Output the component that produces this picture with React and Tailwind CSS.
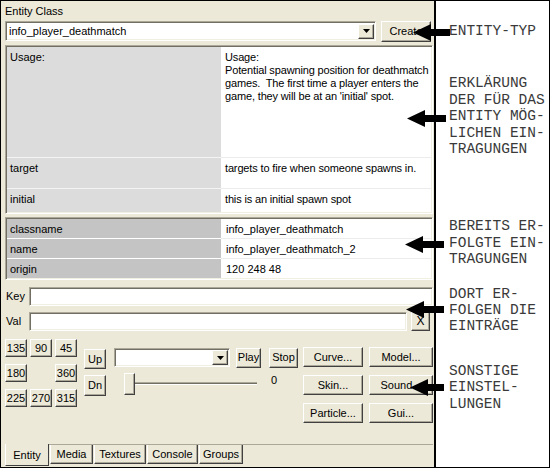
import React from "react";

const raised =
  "border border-t-white border-l-white border-r-[#404040] border-b-[#404040] shadow-[inset_-1px_-1px_0_#aca899] bg-[#ece9d8]";
const sunken =
  "border border-t-[#aca899] border-l-[#aca899] border-r-white border-b-white shadow-[inset_1px_1px_0_#716f64,inset_-1px_-1px_0_#f1efe2]";

function Btn({ className = "", children }) {
  return (
    <div className={`${raised} flex items-center justify-center leading-[13px] ${className}`}>
      {children}
    </div>
  );
}

function DropArrow() {
  return (
    <div className={`${raised} w-[16px] h-[15px] flex items-center justify-center shrink-0`}>
      <svg width="7" height="4" viewBox="0 0 7 4">
        <path d="M0 0h7L3.5 4z" fill="#000" />
      </svg>
    </div>
  );
}

function Arrow({ left, top, len }) {
  return (
    <svg
      className="absolute"
      style={{ left, top }}
      width={len}
      height="17"
      viewBox={`0 0 ${len} 17`}
    >
      <polygon
        points={`0,8.5 18,0 18,5 ${len},5 ${len},12 18,12 18,17`}
        fill="#000"
      />
    </svg>
  );
}

const usageRows = [
  {
    key: "Usage:",
    h: "h-[111px]",
    val: (
      <>
        Usage:
        <br />
        Potential spawning position for deathmatch
        <br />
        games.&nbsp; The first time a player enters the
        <br />
        game, they will be at an 'initial' spot.
      </>
    ),
  },
  { key: "target", h: "h-[31px]", val: "targets to fire when someone spawns in." },
  { key: "initial", h: "h-[21px]", val: "this is an initial spawn spot", last: true },
];

const props = [
  ["classname", "info_player_deathmatch"],
  ["name", "info_player_deathmatch_2"],
  ["origin", "120 248 48"],
];

const tabs = [
  { name: "Entity", w: "w-[44px]", active: true },
  { name: "Media", w: "w-[43px]" },
  { name: "Textures", w: "w-[52px]" },
  { name: "Console", w: "w-[51px]" },
  { name: "Groups", w: "w-[44px]" },
];

export default function App() {
  return (
    <div className="relative w-[550px] h-[468px] border border-black bg-white flex font-['Liberation_Sans',Arial,sans-serif] text-[11px] text-black overflow-hidden">
      {/* entity inspector */}
      <div className="w-[433px] h-[466px] bg-[#ece9d8] flex flex-col pl-[4px] pr-[1px]">
        <div className="h-[20px] pt-[3px] leading-[14px]">Entity Class</div>

        <div className="flex h-[20px]">
          <div className={`${sunken} bg-white w-[371px] h-[20px] flex items-center pr-[1px]`}>
            <span className="flex-1 pl-[3px]">info_player_deathmatch</span>
            <DropArrow />
          </div>
          <Btn className="ml-[5px] w-[50px] h-[21px]">Create</Btn>
        </div>

        {/* keys and descriptions */}
        <div className={`${sunken} mt-[4px] h-[169px] w-[428px] bg-white p-[1px] flex flex-col overflow-hidden`}>
          {usageRows.map((r) => (
            <div key={r.key} className={`flex shrink-0 ${r.h}`}>
              <div className={`w-[214px] shrink-0 bg-[#dcdcdc] pl-[3px] pt-[4px] leading-[13px] ${r.last ? "" : "border-b border-[#f4f4f4]"}`}>
                {r.key}
              </div>
              <div className={`flex-1 min-w-0 pl-[4px] pt-[4px] leading-[13px] whitespace-nowrap tracking-[-0.15px] ${r.last ? "" : "border-b border-[#ececec]"}`}>
                {r.val}
              </div>
            </div>
          ))}
          <div className="flex flex-1">
            <div className="w-[214px] bg-[#dcdcdc]" />
          </div>
        </div>

        {/* current key/value pairs */}
        <div className={`${sunken} mt-[3px] w-[428px] bg-white p-[1px] flex flex-col`}>
          {props.map(([k, v], i) => (
            <div key={k} className={`flex ${i < 2 ? "h-[20px]" : "h-[19px]"}`}>
              <div className={`w-[214px] bg-[#c4c4c4] pl-[3px] pt-[3px] leading-[14px] ${i < 2 ? "border-b border-white" : ""}`}>
                {k}
              </div>
              <div className={`flex-1 pl-[5px] pt-[3px] leading-[14px] ${i < 2 ? "border-b border-[#ececec]" : ""}`}>
                {v}
              </div>
            </div>
          ))}
        </div>

        <div className="flex items-center mt-[7px] h-[19px]">
          <span className="w-[24px] pl-[1px]">Key</span>
          <div className={`${sunken} bg-white w-[404px] h-[19px]`} />
        </div>

        <div className="flex items-center mt-[6px] h-[19px]">
          <span className="w-[24px] pl-[1px]">Val</span>
          <div className={`${sunken} bg-white w-[378px] h-[19px]`} />
          <Btn className="ml-[4px] w-[19px] h-[19px] text-[12px]">X</Btn>
        </div>

        {/* tools */}
        <div className="flex mt-[8px] items-start">
          <div className="grid grid-cols-[22px_22px_22px] gap-x-[3px] gap-y-[7px]">
            <Btn className="h-[18px]">135</Btn>
            <Btn className="h-[18px]">90</Btn>
            <Btn className="h-[18px]">45</Btn>
            <Btn className="h-[18px]">180</Btn>
            <div />
            <Btn className="h-[18px]">360</Btn>
            <Btn className="h-[18px]">225</Btn>
            <Btn className="h-[18px]">270</Btn>
            <Btn className="h-[18px]">315</Btn>
          </div>

          <div className="ml-[7px] flex flex-col">
            <Btn className="mt-[10px] w-[22px] h-[20px]">Up</Btn>
            <Btn className="mt-[6px] w-[22px] h-[21px]">Dn</Btn>
          </div>

          <div className="ml-[8px] flex flex-col">
            <div className="mt-[9px] flex items-center h-[19px]">
              <div className={`${sunken} bg-white w-[116px] h-[19px] flex items-center justify-end pr-[1px]`}>
                <DropArrow />
              </div>
              <Btn className="ml-[6px] w-[25px] h-[20px]">Play</Btn>
              <Btn className="ml-[8px] w-[29px] h-[20px]">Stop</Btn>
            </div>
            <div className="mt-[6px] flex items-start">
              <div className="relative ml-[10px] w-[133px] h-[22px]">
                <div className="absolute left-0 right-0 top-[9px] h-[3px] border-t border-[#aca899] border-b border-b-white bg-[#716f64]" />
                <div className={`${raised} absolute left-0 top-0 w-[11px] h-[22px]`} />
              </div>
              <span className="ml-[14px] leading-[13px] mt-[1px]">0</span>
            </div>
          </div>

          <div className="ml-[5px] mt-[8px] grid grid-cols-[60px_64px] gap-x-[6px] gap-y-[8px]">
            <Btn className="h-[20px]">Curve...</Btn>
            <Btn className="h-[20px]">Model...</Btn>
            <Btn className="h-[20px]">Skin...</Btn>
            <Btn className="h-[20px]">Sound...</Btn>
            <Btn className="h-[20px]">Particle...</Btn>
            <Btn className="h-[20px]">Gui...</Btn>
          </div>
        </div>

        {/* bottom tabs */}
        <div className="mt-auto mb-[1px] h-[22px] border-t border-[#aca899] flex items-start w-[428px]">
          {tabs.map((t) =>
            t.active ? (
              <div
                key={t.name}
                className={`${t.w} -mt-px h-[22px] bg-[#ece9d8] border-l border-l-white border-r border-r-[#404040] border-b border-b-[#404040] flex items-end justify-center pb-[3px] leading-[13px]`}
              >
                {t.name}
              </div>
            ) : (
              <div
                key={t.name}
                className={`${t.w} h-[19px] ml-[1px] border-l border-l-white border-r border-r-[#404040] border-b border-b-[#404040] shadow-[inset_-1px_-1px_0_#aca899] flex items-center justify-center leading-[13px]`}
              >
                {t.name}
              </div>
            )
          )}
        </div>
      </div>

      <div className="w-[2px] bg-black" />

      {/* notes */}
      <div className="flex-1 pl-[13px] font-['Liberation_Mono','Courier_New',monospace] text-[14.5px] leading-[16.4px] text-[#3a3a3a] whitespace-pre">
        <div className="mt-[22px]">ENTITY-TYP</div>
        <div className="mt-[36px]">
          {"ERKLÄRUNG\nDER FÜR DAS\nENTITY MÖG-\nLICHEN EIN-\nTRAGUNGEN"}
        </div>
        <div className="mt-[61px]">{"BEREITS ER-\nFOLGTE EIN-\nTRAGUNGEN"}</div>
        <div className="mt-[18px]">{"DORT ER-\nFOLGEN DIE\nEINTRÄGE"}</div>
        <div className="mt-[28px]">{"SONSTIGE\nEINSTEL-\nLUNGEN"}</div>
      </div>

      <Arrow left={412} top={23} len={37} />
      <Arrow left={406} top={109} len={39} />
      <Arrow left={404} top={235} len={39} />
      <Arrow left={405} top={300} len={38} />
      <Arrow left={409} top={378} len={34} />
    </div>
  );
}
